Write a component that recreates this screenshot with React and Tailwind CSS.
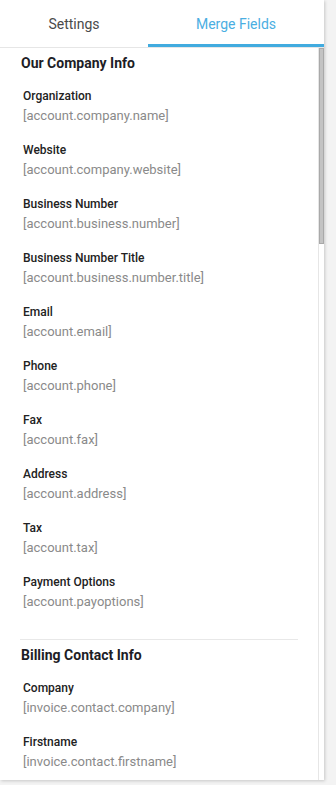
import React from 'react';

const sections = [
  {
    title: 'Our Company Info',
    items: [
      ['Organization', '[account.company.name]'],
      ['Website', '[account.company.website]'],
      ['Business Number', '[account.business.number]'],
      ['Business Number Title', '[account.business.number.title]'],
      ['Email', '[account.email]'],
      ['Phone', '[account.phone]'],
      ['Fax', '[account.fax]'],
      ['Address', '[account.address]'],
      ['Tax', '[account.tax]'],
      ['Payment Options', '[account.payoptions]'],
    ],
  },
  {
    title: 'Billing Contact Info',
    items: [
      ['Company', '[invoice.contact.company]'],
      ['Firstname', '[invoice.contact.firstname]'],
    ],
  },
];

export default function App() {
  return (
    <div className="w-[336px] h-[785px] bg-[#f3f3f3] overflow-hidden" style={{ fontFamily: 'Roboto, "Liberation Sans", sans-serif' }}>
      <div className="w-[324px] h-[780px] bg-white flex flex-col shadow-[1px_1px_3px_rgba(0,0,0,0.18)]">
        {/* tabs */}
        <div className="flex h-[48px] border-b border-[#e6e6e6] shrink-0">
          <button className="w-[148px] h-full flex items-center justify-center text-[14px] text-[#4a4a4a] pt-[1px]">
            Settings
          </button>
          <button className="flex-1 h-full flex items-center justify-center text-[14px] text-[#4aaee2] border-b-[3px] border-[#41abdf] mb-[-1px] pt-[4px]">
            Merge Fields
          </button>
        </div>

        {/* body */}
        <div className="flex flex-1 min-h-0">
          <div className="flex-1 overflow-hidden px-[20px]">
            {sections.map((s, si) => (
              <div key={s.title} className={si > 0 ? 'border-t border-[#e8e8e8] pt-[6px]' : 'pt-[6px]'}>
                <h3 className="text-[14px] leading-[18px] font-bold text-[#1d1d26] pl-[1px] mb-[16px]">{s.title}</h3>
                <div className="pb-[11px]">
                  {s.items.map(([label, val]) => (
                    <div key={label} className="pl-[3px] pb-[16px]">
                      <div className="text-[12px] leading-[16px] font-medium text-[#222]">{label}</div>
                      <div className="text-[13px] leading-[20px] mt-[2px] text-[#8a8a8a]">{val}</div>
                    </div>
                  ))}
                </div>
              </div>
            ))}
          </div>
          {/* scrollbar */}
          <div className="w-[6px] shrink-0 border-l border-[#e6e6e6] bg-white">
            <div className="h-[196px] bg-[#c3c3c3] border border-[#a9a9a9]" />
          </div>
        </div>
      </div>
    </div>
  );
}
